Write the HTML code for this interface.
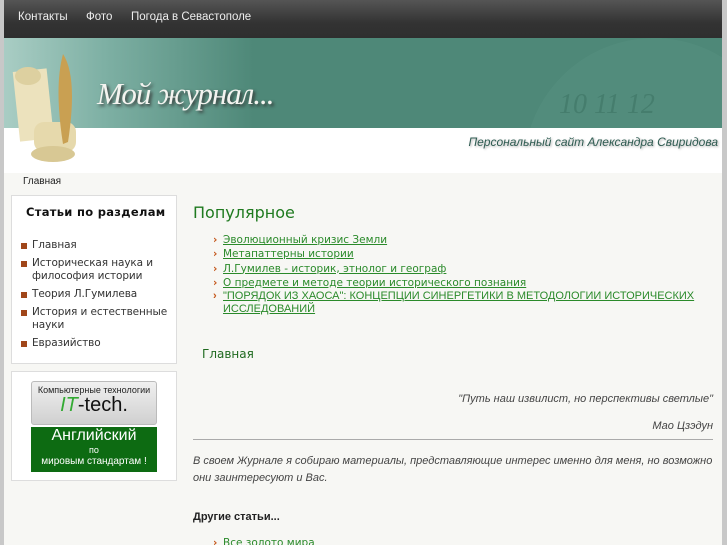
<!DOCTYPE html>
<html><head><meta charset="utf-8"><style>
*{margin:0;padding:0;box-sizing:border-box}
html,body{width:727px;height:545px;overflow:hidden}
body{background:#c8c8c8;font-family:"DejaVu Sans","Liberation Sans",sans-serif;position:relative}
#page{position:absolute;left:4px;top:0;width:718px;height:545px;background:#f7f7f4;overflow:hidden}
#top{position:absolute;left:0;top:0;width:718px;height:38px;background:linear-gradient(#555,#333 60%,#2e2e2e);}
#top a{position:absolute;top:11px;color:#eee;font:11.5px "Liberation Sans",sans-serif;text-decoration:none}
#banner{position:absolute;left:0;top:38px;width:718px;height:90px;background:linear-gradient(90deg,#a9cdc4 0,#7eb0a4 100px,#4e8878 250px,#4e8878 100%)}
#white{position:absolute;left:0;top:128px;width:718px;height:45px;background:#fff}
#title{position:absolute;left:93px;top:76px;font:italic 31px "Liberation Serif",serif;color:#f4f4f0;text-shadow:2px 2px 3px #333;letter-spacing:-1px}
#sub{position:absolute;right:4px;top:135px;font:italic 12px "Liberation Sans",sans-serif;color:#2f5c52;text-shadow:1px 1px 2px #aaa}
#crumb{position:absolute;left:19px;top:176px;font:10px "Liberation Sans",sans-serif;color:#222}
.box{position:absolute;background:#fff;border:1px solid #ddd}
.side h3{font:bold 11.5px "DejaVu Sans",sans-serif;letter-spacing:.3px;color:#111;margin:9px 0 0 14px;white-space:nowrap}
.side ul{list-style:none;margin:20px 0 0 9px}
.side li{font:10.5px "DejaVu Sans",sans-serif;color:#333;padding-left:11px;position:relative;line-height:13px;margin-bottom:5px;letter-spacing:-.1px}
.side li:before{content:"";position:absolute;left:0;top:4px;width:6px;height:6px;background:#a0461a}
h2{position:absolute;left:189px;top:203px;font:16px "DejaVu Sans",sans-serif;color:#1f7a1f}
.pop{position:absolute;left:209px;top:233px;list-style:none}
.pop li{font:10.5px "DejaVu Sans",sans-serif;color:#2a8a2a;line-height:14.3px;padding-left:10px;position:relative;text-decoration:underline}
.pop li:before{content:"›";position:absolute;left:0;color:#c4561a;font-weight:bold}
.it{font:italic 11px "Liberation Sans",sans-serif;color:#444}
</style></head><body><div id="page">
<div id="top"><a style="left:14px">Контакты</a><a style="left:82px">Фото</a><a style="left:127px">Погода в Севастополе</a></div>
<div id="banner">
<svg width="718" height="90" style="position:absolute;left:0;top:0"><circle cx="650" cy="130" r="130" fill="#5c9485" opacity=".35"/><text x="555" y="75" font-family="Liberation Serif" font-style="italic" font-size="28" fill="#427a6a" opacity=".8">10 11 12</text></svg>
</div>
<div id="white"></div>
<svg width="95" height="125" style="position:absolute;left:4px;top:42px"><rect x="8" y="28" width="34" height="70" fill="#ece2bd" transform="rotate(-6 25 60)"/><ellipse cx="20" cy="34" rx="13" ry="9" fill="#ddd0a0"/><rect x="26" y="80" width="42" height="30" rx="10" fill="#e6d9ac"/><ellipse cx="45" cy="112" rx="22" ry="8" fill="#d8c894"/><path d="M55 12 Q70 35 60 100 L55 102 Q46 45 55 12Z" fill="#c9a052"/></svg>
<div id="title">Мой журнал...</div>
<div id="sub">Персональный сайт Александра Свиридова</div>
<div id="crumb">Главная</div>
<div class="box side" style="left:7px;top:195px;width:166px;height:169px"><h3>Статьи по разделам</h3><ul>
<li>Главная</li><li>Историческая наука и философия истории</li><li>Теория Л.Гумилева</li><li>История и естественные науки</li><li>Евразийство</li></ul></div>
<div class="box" style="left:7px;top:371px;width:166px;height:110px">
<div style="position:absolute;left:19px;top:9px;width:126px;height:44px;background:linear-gradient(#f0f0f0,#d0d0d0);border:1px solid #bbb;border-radius:3px;text-align:center"><div style="font:9px 'Liberation Sans';color:#222;margin-top:3px">Компьютерные технологии</div><div style="font:20px 'Liberation Sans';color:#111;line-height:20px"><i style="color:#3a3">IT</i>-tech.</div></div>
<div style="position:absolute;left:19px;top:55px;width:126px;height:45px;background:#0d6b12;text-align:center;color:#fff"><div style="font:16px 'Liberation Sans';line-height:18px">Английский</div><div style="font:9px 'Liberation Sans';line-height:11px">по</div><div style="font:10px 'Liberation Sans';line-height:12px">мировым стандартам !</div></div></div>
<h2>Популярное</h2>
<ul class="pop"><li>Эволюционный кризис Земли</li><li>Метапаттерны истории</li><li>Л.Гумилев - историк, этнолог и географ</li><li>О предмете и методе теории исторического познания</li><li style="font-family:'Liberation Sans';font-size:11px;line-height:13px">"ПОРЯДОК ИЗ ХАОСА": КОНЦЕПЦИИ СИНЕРГЕТИКИ В МЕТОДОЛОГИИ ИСТОРИЧЕСКИХ<br>ИССЛЕДОВАНИЙ</li></ul>
<div style="position:absolute;left:198px;top:347px;font:12px 'DejaVu Sans';color:#1f6a1f">Главная</div>
<div class="it" style="position:absolute;right:9px;top:393px">"Путь наш извилист, но перспективы светлые"</div>
<div class="it" style="position:absolute;right:9px;top:420px">Мао Цзэдун</div>
<div style="position:absolute;left:189px;top:439px;width:520px;border-top:1px solid #aaa"></div>
<div class="it" style="position:absolute;left:189px;top:453px;width:525px;line-height:17px">В своем Журнале я собираю материалы, представляющие интерес именно для меня, но возможно они заинтересуют и Вас.</div>
<div style="position:absolute;left:189px;top:511px;font:bold 11px 'Liberation Sans';color:#222">Другие статьи...</div>
<ul class="pop" style="top:536px"><li>Все золото мира</li></ul>
</div></body></html>
